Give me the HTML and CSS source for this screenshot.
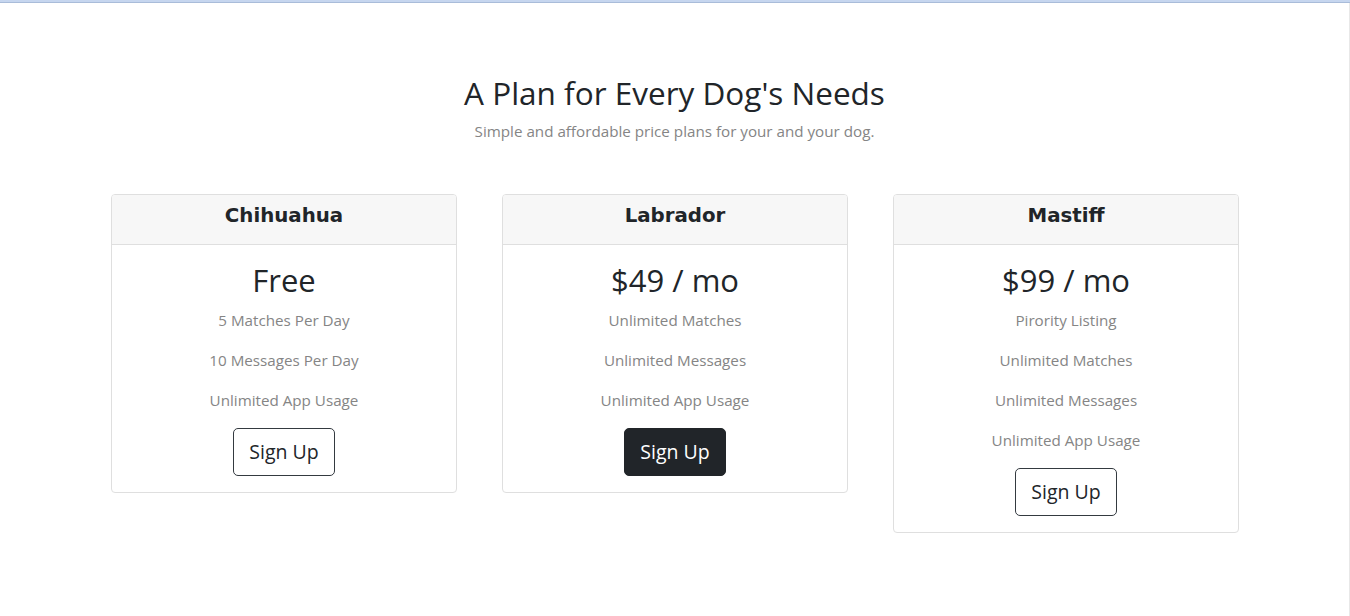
FILE: index.html
```html
<!DOCTYPE html>
<html lang="en">
<head>
<meta charset="utf-8">
<title>Pricing</title>
<link rel="stylesheet" href="styles.css">
</head>
<body>
<div class="topbar"></div>
<div class="page">
  <section class="pricing">
    <h2 class="title">A Plan for Every Dog's Needs</h2>
    <p class="subtitle">Simple and affordable price plans for your and your dog.</p>
    <div class="cards">
      <div class="card">
        <div class="card-header"><h3>Chihuahua</h3></div>
        <div class="card-body">
          <h2 class="price">Free</h2>
          <p class="feature">5 Matches Per Day</p>
          <p class="feature">10 Messages Per Day</p>
          <p class="feature">Unlimited App Usage</p>
          <button class="btn btn-outline">Sign Up</button>
        </div>
      </div>
      <div class="card">
        <div class="card-header"><h3>Labrador</h3></div>
        <div class="card-body">
          <h2 class="price">$49 / mo</h2>
          <p class="feature">Unlimited Matches</p>
          <p class="feature">Unlimited Messages</p>
          <p class="feature">Unlimited App Usage</p>
          <button class="btn btn-dark">Sign Up</button>
        </div>
      </div>
      <div class="card">
        <div class="card-header"><h3>Mastiff</h3></div>
        <div class="card-body">
          <h2 class="price">$99 / mo</h2>
          <p class="feature">Pirority Listing</p>
          <p class="feature">Unlimited Matches</p>
          <p class="feature">Unlimited Messages</p>
          <p class="feature">Unlimited App Usage</p>
          <button class="btn btn-outline">Sign Up</button>
        </div>
      </div>
    </div>
  </section>
</div>
</body>
</html>
```
FILE: styles.css
```css
* {
  box-sizing: border-box;
}

html, body {
  margin: 0;
  padding: 0;
  background: #ffffff;
}

body {
  font-family: "Open Sans", "Noto Sans", sans-serif;
  color: #212529;
  width: 1350px;
  height: 616px;
  overflow: hidden;
}

.topbar {
  height: 3px;
  background: #c6d6ef;
  border-bottom: 1px solid #a9bcd9;
}

.page {
  width: 1350px;
  height: 613px;
  border-right: 1px solid #e8e8e8;
}

.pricing {
  padding-top: 71px;
  text-align: center;
}

.title {
  margin: 0;
  font-size: 31.5px;
  line-height: 38px;
  font-weight: 500;
  color: #212529;
}

.subtitle {
  margin: 7px 0 0;
  font-size: 15.2px;
  line-height: 24px;
  color: #858585;
}

.cards {
  display: flex;
  align-items: flex-start;
  gap: 45px;
  padding: 0 110px 0 111px;
  margin-top: 51px;
}

.card {
  flex: 0 0 346px;
  border: 1px solid #dfdfdf;
  border-radius: 4px;
  overflow: hidden;
  background: #fff;
}

.card-header {
  background: #f7f7f7;
  border-bottom: 1px solid #dfdfdf;
  padding: 9px 0 16px;
}

.card-header h3 {
  margin: 0;
  font-family: "DejaVu Sans", "Noto Sans", sans-serif;
  font-weight: 700;
  font-size: 19.8px;
  line-height: 24px;
  color: #212529;
}

.card-body {
  padding: 16px 20px 16px;
  display: flex;
  flex-direction: column;
  align-items: center;
}

.price {
  margin: 0 0 9px;
  font-size: 31px;
  line-height: 38px;
  font-weight: 500;
  color: #212529;
}

.feature {
  margin: 0 0 16px;
  font-size: 15.2px;
  line-height: 24px;
  color: #858585;
}

.btn {
  font-family: "Open Sans", "Noto Sans", sans-serif;
  font-size: 19.5px;
  line-height: 30px;
  height: 48px;
  padding: 8px 15px;
  border-radius: 5px;
  border: 1px solid #343a40;
  cursor: pointer;
}

.btn-outline {
  background: #fff;
  color: #212529;
}

.btn-dark {
  background: #212529;
  border-color: #212529;
  color: #fff;
}
```
